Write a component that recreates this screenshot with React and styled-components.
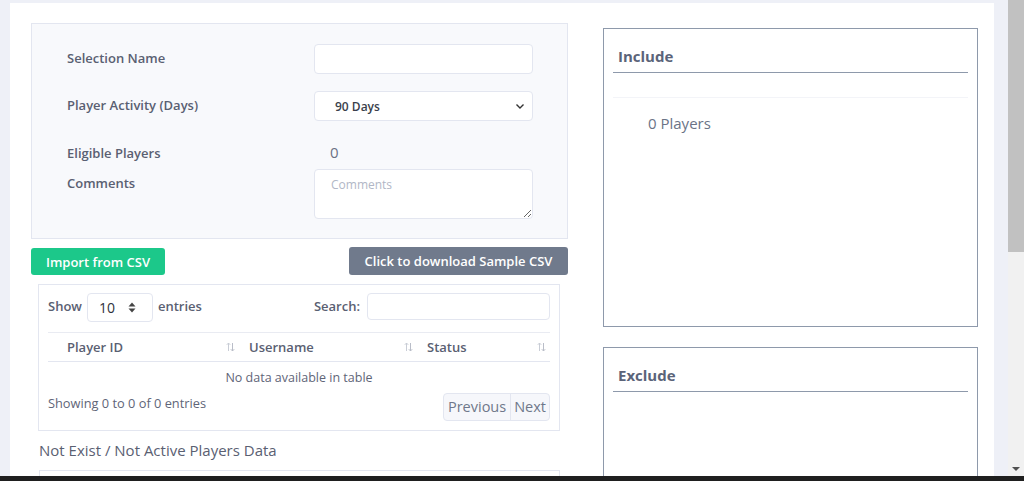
import React from "react";
import styled, { createGlobalStyle } from "styled-components";

const GlobalStyle = createGlobalStyle`
  html, body {
    margin: 0;
    padding: 0;
    overflow: hidden;
  }
  body {
    font-family: "Open Sans", "Noto Sans", sans-serif;
    color: #5a6072;
  }
  * {
    box-sizing: border-box;
  }
`;

const Screen = styled.div`
  display: flex;
  flex-direction: column;
  width: 1024px;
  height: 481px;
  overflow: hidden;
`;

const Viewport = styled.div`
  display: flex;
  height: 476px;
`;

const Page = styled.div`
  flex: 1;
  display: flex;
  background: #eef0f7;
  padding: 3px 14px 0 10px;
`;

const Card = styled.div`
  flex: 1;
  background: #fff;
  display: grid;
  grid-template-columns: 537px 375px;
  column-gap: 35px;
  padding: 20px 16px 0 21px;
  overflow: hidden;
`;

const Scrollbar = styled.div`
  width: 16px;
  background: #f1f1f1;
  display: flex;
  flex-direction: column;
  justify-content: space-between;
  align-items: center;
`;

const Thumb = styled.div`
  width: 16px;
  height: 252px;
  background: #c1c1c1;
`;

const ArrowDown = styled.div`
  width: 0;
  height: 0;
  border-left: 4px solid transparent;
  border-right: 4px solid transparent;
  border-top: 4px solid #505050;
  margin-bottom: 5px;
`;

const Taskbar = styled.div`
  height: 5px;
  background: #1f1f1f;
`;

const LeftColumn = styled.div`
  display: flex;
  flex-direction: column;
`;

const FormPanel = styled.div`
  background: #f8f9fc;
  border: 1px solid #e3e6f0;
  padding: 20px 35px 19px 35px;
  display: flex;
  flex-direction: column;
`;

const FormRow = styled.div`
  display: grid;
  grid-template-columns: 247px 219px;
  align-items: ${(p) => (p.$top ? "start" : "center")};
  margin-top: ${(p) => p.$mt || 0}px;
  height: ${(p) => (p.$h ? `${p.$h}px` : "auto")};
`;

const Label = styled.label`
  font-size: 13px;
  font-weight: 600;
  color: #5a6072;
  padding-top: ${(p) => p.$pt || 0}px;
  padding-bottom: ${(p) => p.$pb || 0}px;
`;

const TextInput = styled.input`
  height: 30px;
  width: 219px;
  border: 1px solid #e3e6f0;
  border-radius: 4px;
  background: #fff;
  outline: none;
  padding: 0 16px;
  font-family: inherit;
`;

const SelectBox = styled.div`
  height: 30px;
  width: 219px;
  border: 1px solid #e3e6f0;
  border-radius: 4px;
  background: #fff;
  display: flex;
  align-items: center;
  justify-content: space-between;
  padding: 0 7px 0 20px;
  font-size: 12px;
  font-weight: 600;
  color: #3a3f4b;
`;

const Value = styled.div`
  font-size: 15px;
  line-height: 20px;
  color: #6b7184;
  padding-left: 16px;
  padding-bottom: 2px;
`;

const TextArea = styled.textarea`
  height: 50px;
  width: 219px;
  border: 1px solid #e3e6f0;
  border-radius: 4px;
  background: #fff;
  padding: 6px 16px;
  font-family: inherit;
  font-size: 12px;
  resize: vertical;
  outline: none;
  &::placeholder {
    color: #b1b7c6;
  }
`;

const ButtonRow = styled.div`
  display: flex;
  justify-content: space-between;
  align-items: flex-start;
  margin-top: 8px;
`;

const Button = styled.button`
  height: ${(p) => p.$h}px;
  width: ${(p) => p.$w}px;
  margin-top: ${(p) => p.$mt || 0}px;
  border: none;
  border-radius: 3px;
  background: ${(p) => p.$bg};
  color: #fff;
  font-family: inherit;
  font-size: 13px;
  font-weight: 600;
  padding: 0;
`;

const TableCard = styled.div`
  margin: 9px 8px 0 7px;
  border: 1px solid #e3e6f0;
  padding: 8px 9px 9px 9px;
`;

const Controls = styled.div`
  display: flex;
  justify-content: space-between;
  align-items: center;
  height: 29px;
  font-size: 13px;
  font-weight: 600;
  color: #5a6072;
`;

const ControlGroup = styled.div`
  display: flex;
  align-items: center;
  gap: ${(p) => p.$gap}px;
  & > span {
    padding-bottom: 3px;
  }
`;

const LengthSelect = styled.div`
  width: 66px;
  height: 29px;
  border: 1px solid #e3e6f0;
  border-radius: 4px;
  display: flex;
  align-items: center;
  justify-content: space-between;
  padding: 0 16px 0 11px;
  font-size: 14px;
  font-weight: 400;
  color: #2e323c;
`;

const SearchInput = styled.input`
  width: 183px;
  height: 27px;
  margin-bottom: 2px;
  border: 1px solid #e3e6f0;
  border-radius: 4px;
  outline: none;
`;

const Table = styled.table`
  width: 100%;
  border-collapse: collapse;
  margin-top: 10px;
  font-size: 13px;
`;

const Th = styled.th`
  text-align: left;
  font-weight: 600;
  color: #5a6072;
  height: 29px;
  padding: 0 0 1px ${(p) => p.$pl}px;
  border-top: 1px solid #e9ebf2;
  border-bottom: 1px solid #e3e6f0;
  width: ${(p) => p.$w}px;
`;

const ThInner = styled.div`
  display: flex;
  align-items: center;
  justify-content: space-between;
  padding-right: 4px;
`;

const EmptyCell = styled.td`
  text-align: center;
  height: 31px;
  padding-bottom: 0;
  font-size: 12.5px;
  color: #5f6578;
`;

const Footer = styled.div`
  display: flex;
  justify-content: space-between;
  align-items: flex-start;
  font-size: 12.8px;
  color: #5f6578;
`;

const Info = styled.div`
  padding-top: 1px;
`;

const Pager = styled.div`
  display: flex;
  border: 1px solid #e3e6f0;
  border-radius: 4px;
  background: #f6f7fb;
  overflow: hidden;
`;

const PageButton = styled.div`
  height: 26px;
  padding: 0 ${(p) => p.$px}px;
  display: flex;
  align-items: center;
  font-size: 14.5px;
  color: #6f778a;
  border-left: ${(p) => (p.$divider ? "1px solid #e3e6f0" : "none")};
`;

const SectionTitle = styled.h3`
  margin: 9px 0 0 8px;
  font-size: 15px;
  font-weight: 500;
  color: #5a6072;
  line-height: 20px;
`;

const EmptyBox = styled.div`
  margin: 10px 8px 0 8px;
  border: 1px solid #e3e6f0;
  height: 40px;
`;

const RightColumn = styled.div`
  display: flex;
  flex-direction: column;
  padding-top: 5px;
`;

const ListBox = styled.div`
  border: 1px solid #8e99ab;
  height: ${(p) => p.$h}px;
  margin-top: ${(p) => p.$mt || 0}px;
  padding: 0 9px;
  flex-shrink: 0;
`;

const ListTitle = styled.h4`
  margin: 0;
  padding: 17px 0 6px 5px;
  font-size: 15px;
  font-weight: 700;
  line-height: 20px;
  color: #5b6479;
  border-bottom: 1px solid #8e99ab;
`;

const ListDivider = styled.div`
  margin-top: 24px;
  border-top: 1px solid #f3f4f8;
`;

const Count = styled.div`
  padding: 15px 0 0 35px;
  font-size: 15px;
  line-height: 20px;
  color: #6b7386;
`;

const Chevron = () => (
  <svg width="10" height="10" viewBox="0 0 10 10">
    <path d="M1.5 3.5 L5 7 L8.5 3.5" fill="none" stroke="#333" strokeWidth="1.4" />
  </svg>
);

const Spinner = () => (
  <svg width="8" height="11" viewBox="0 0 8 11">
    <path d="M4 0.5 L7.5 4.5 H0.5 Z" fill="#444" />
    <path d="M4 10.5 L7.5 6.5 H0.5 Z" fill="#444" />
  </svg>
);

const SortIcon = () => (
  <svg width="9" height="10" viewBox="0 0 9 10">
    <path d="M2.5 9 V1 M0.8 2.8 L2.5 1 L4.2 2.8" fill="none" stroke="#c9cdd6" strokeWidth="1" />
    <path d="M6.5 1 V9 M4.8 7.2 L6.5 9 L8.2 7.2" fill="none" stroke="#b9bdc8" strokeWidth="1" />
  </svg>
);

export default function App() {
  return (
    <Screen>
      <GlobalStyle />
      <Viewport>
        <Page>
          <Card>
            <LeftColumn>
              <FormPanel>
                <FormRow $h={30}>
                  <Label $pb={2}>Selection Name</Label>
                  <TextInput />
                </FormRow>
                <FormRow $h={30} $mt={17}>
                  <Label $pb={2}>Player Activity (Days)</Label>
                  <SelectBox>
                    <span>90 Days</span>
                    <Chevron />
                  </SelectBox>
                </FormRow>
                <FormRow $h={20} $mt={21}>
                  <Label>Eligible Players</Label>
                  <Value>0</Value>
                </FormRow>
                <FormRow $top $mt={7}>
                  <Label $pt={5}>Comments</Label>
                  <TextArea placeholder="Comments" />
                </FormRow>
              </FormPanel>

              <ButtonRow>
                <Button $bg="#1cc88a" $w={134} $h={27} $mt={1}>
                  Import from CSV
                </Button>
                <Button $bg="#707a8c" $w={219} $h={28}>
                  Click to download Sample CSV
                </Button>
              </ButtonRow>

              <TableCard>
                <Controls>
                  <ControlGroup $gap={5}>
                    <span>Show</span>
                    <LengthSelect>
                      <span>10</span>
                      <Spinner />
                    </LengthSelect>
                    <span>entries</span>
                  </ControlGroup>
                  <ControlGroup $gap={7}>
                    <span>Search:</span>
                    <SearchInput />
                  </ControlGroup>
                </Controls>
                <Table>
                  <thead>
                    <tr>
                      <Th $pl={19} $w={191}>
                        <ThInner>
                          Player ID <SortIcon />
                        </ThInner>
                      </Th>
                      <Th $pl={10} $w={178}>
                        <ThInner>
                          Username <SortIcon />
                        </ThInner>
                      </Th>
                      <Th $pl={10}>
                        <ThInner>
                          Status <SortIcon />
                        </ThInner>
                      </Th>
                    </tr>
                  </thead>
                  <tbody>
                    <tr>
                      <EmptyCell colSpan={3}>No data available in table</EmptyCell>
                    </tr>
                  </tbody>
                </Table>
                <Footer>
                  <Info>Showing 0 to 0 of 0 entries</Info>
                  <Pager>
                    <PageButton $px={4}>Previous</PageButton>
                    <PageButton $px={3} $divider>
                      Next
                    </PageButton>
                  </Pager>
                </Footer>
              </TableCard>

              <SectionTitle>Not Exist / Not Active Players Data</SectionTitle>
              <EmptyBox />
            </LeftColumn>

            <RightColumn>
              <ListBox $h={299}>
                <ListTitle>Include</ListTitle>
                <ListDivider />
                <Count>0 Players</Count>
              </ListBox>
              <ListBox $h={200} $mt={20}>
                <ListTitle>Exclude</ListTitle>
              </ListBox>
            </RightColumn>
          </Card>
        </Page>
        <Scrollbar>
          <Thumb />
          <ArrowDown />
        </Scrollbar>
      </Viewport>
      <Taskbar />
    </Screen>
  );
}
